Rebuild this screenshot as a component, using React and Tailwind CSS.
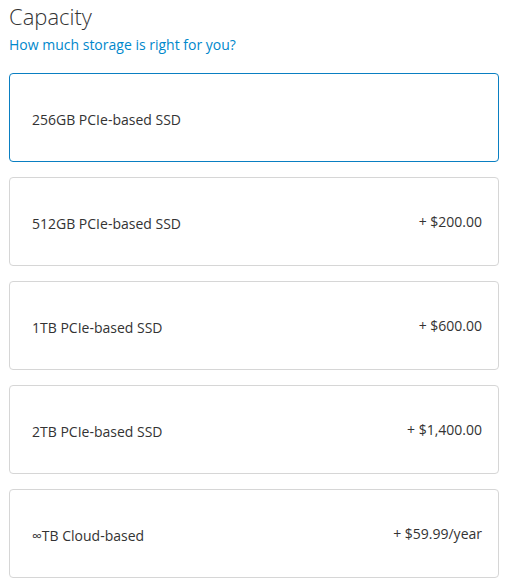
import React from 'react';

const options = [
    { label: "256GB PCIe-based SSD", price: "" },
    { label: "512GB PCIe-based SSD", price: "+ $200.00" },
    { label: "1TB PCIe-based SSD", price: "+ $600.00" },
    { label: "2TB PCIe-based SSD", price: "+ $1,400.00" },
    { label: "∞TB Cloud-based", price: "+ $59.99/year" },
];

function App() {
    const selected = 0;

    return (
        <div className="w-[506px] h-[585px] bg-white px-[9px] pt-[1px] font-['Open_Sans',sans-serif] text-[#333]">
            <h2 className="text-[22px] font-light leading-[30px] text-[#333]">Capacity</h2>
            <a className="block text-[14px] leading-[20px] mt-[4px] text-[#0088cc] cursor-pointer">How much storage is right for you?</a>

            <div className="mt-[18px] flex flex-col gap-[15px] w-[490px]">
                {options.map((opt, i) => (
                    <div
                        key={opt.label}
                        className={`h-[89px] rounded-[4px] border flex items-center justify-between pl-[22px] pr-[16px] ${i === selected ? 'border-[#0a7fc2]' : 'border-[#d6d6d6]'}`}
                    >
                        <span className="text-[14px] text-[#333] mt-[3px]">{opt.label}</span>
                        {opt.price && <span className="text-[14px] text-[#333]">{opt.price}</span>}
                    </div>
                ))}
            </div>
        </div>
    );
}

export default App;
